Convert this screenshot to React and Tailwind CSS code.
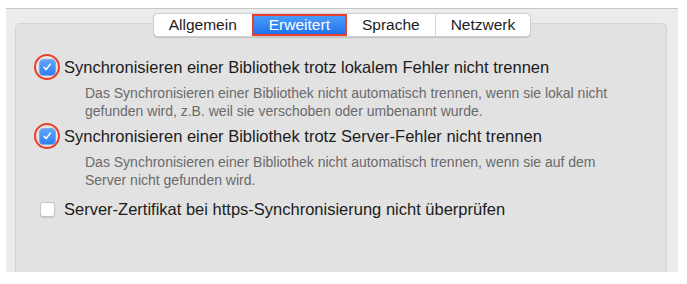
function Check({ checked, ring }) {
  return (
    <span className="relative flex h-[20px] w-[20px] shrink-0 items-center justify-center">
      {ring && <span className="absolute inset-[-3px] rounded-full border-2 border-[#e8402c]" />}
      {checked ? (
        <span className="flex h-[15px] w-[15px] items-center justify-center rounded-[3px] bg-gradient-to-b from-[#5ea6fb] to-[#2f7ef0] shadow-[0_0_0_0.5px_#2a6fd6]">
          <svg width="10" height="10" viewBox="0 0 10 10">
            <path d="M2 5.3 L4.1 7.6 L8.2 2.2" fill="none" stroke="white" strokeWidth="1.5" strokeLinecap="round" strokeLinejoin="round" />
          </svg>
        </span>
      ) : (
        <span className="h-[15px] w-[15px] rounded-[3px] border border-[#c4c4c4] bg-white shadow-[0_0.5px_1px_rgba(0,0,0,0.12)]" />
      )}
    </span>
  );
}

function Option({ checked, ring, title, desc, className = "" }) {
  return (
    <div className={`flex flex-col ${className}`}>
      <div className="flex items-center gap-[7px]">
        <Check checked={checked} ring={ring} />
        <span className="text-[16.5px] leading-[20px] text-[#1c1c1c]">{title}</span>
      </div>
      {desc && (
        <p className="mt-[8px] pl-[48px] text-[14px] leading-[17.5px] text-[#6a6a6a]">{desc}</p>
      )}
    </div>
  );
}

export default function App() {
  const tabs = ["Allgemein", "Erweitert", "Sprache", "Netzwerk"];
  return (
    <div className="h-[284px] w-[687px] bg-white font-['Liberation_Sans',Arial,sans-serif]">
      <div className="h-[8px]" />
      <div className="ml-[6px] flex h-[264px] w-[672px] flex-col border-t border-[#c6c6c6] bg-[#ececec]">
        <div className="relative z-10 mt-[4px] flex justify-center">
          <div className="flex h-[24px] items-stretch rounded-[5px] border border-[#cfcfcf] bg-white text-[15.5px] text-[#1c1c1c] shadow-[0_0.5px_1px_rgba(0,0,0,0.15)]">
            {tabs.map((t, i) =>
              t === "Erweitert" ? (
                <span key={t} className="flex items-center border-2 border-[#e8402c] bg-gradient-to-b from-[#4b9bfa] to-[#1f73ec] px-[15px] text-white">
                  {t}
                </span>
              ) : (
                <span key={t} className={`flex items-center px-[15px] ${i === 3 ? "border-l border-[#d8d8d8]" : ""}`}>
                  {t}
                </span>
              )
            )}
          </div>
        </div>
        <div className="mt-[-14px] ml-[9px] mr-[11px] flex-1 rounded-t-[5px] border border-b-0 border-[#d5d5d5] bg-[#e2e2e2] pl-[21px] pt-[33px]">
          <div className="flex flex-col">
            <Option
              checked
              ring
              title="Synchronisieren einer Bibliothek trotz lokalem Fehler nicht trennen"
              desc={
                <>
                  Das Synchronisieren einer Bibliothek nicht automatisch trennen, wenn sie lokal nicht
                  <br />
                  gefunden wird, z.B. weil sie verschoben oder umbenannt wurde.
                </>
              }
            />
            <Option
              className="mt-[6px]"
              checked
              ring
              title="Synchronisieren einer Bibliothek trotz Server-Fehler nicht trennen"
              desc={
                <>
                  Das Synchronisieren einer Bibliothek nicht automatisch trennen, wenn sie auf dem
                  <br />
                  Server nicht gefunden wird.
                </>
              }
            />
            <Option className="mt-[10px]" title="Server-Zertifikat bei https-Synchronisierung nicht überprüfen" />
          </div>
        </div>
      </div>
    </div>
  );
}
